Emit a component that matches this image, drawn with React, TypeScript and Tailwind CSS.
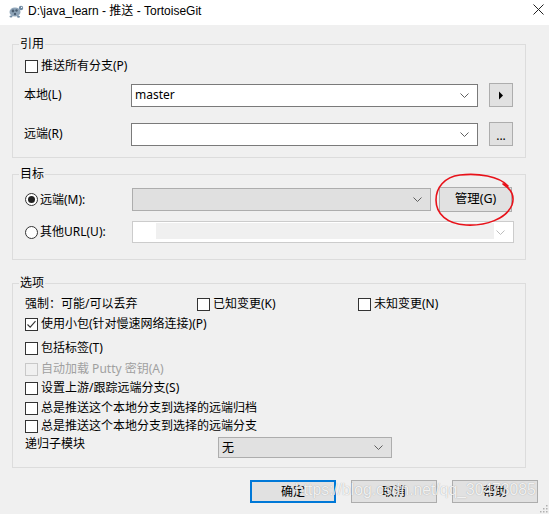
import React from 'react';
import clsx from 'clsx';

const Chevron = ({ color = '#5f5f5f' }: { color?: string }) => (
  <svg width="9" height="5" viewBox="0 0 9 5" className="shrink-0">
    <path d="M0.5 0.5 L4.5 4.5 L8.5 0.5" fill="none" stroke={color} strokeWidth="1" />
  </svg>
);

function Box({ checked, disabled }: { checked?: boolean; disabled?: boolean }) {
  return (
    <span
      className={clsx(
        'w-[13px] h-[13px] border flex items-center justify-center shrink-0',
        disabled ? 'border-[#c8c8c8] bg-[#f0f0f0]' : 'border-[#333333] bg-white'
      )}
    >
      {checked && (
        <svg width="11" height="11" viewBox="0 0 11 11">
          <path d="M1.5 5.5 L4.2 8.2 L9.5 2.2" fill="none" stroke="#333" strokeWidth="1.1" />
        </svg>
      )}
    </span>
  );
}

function Check({ label, checked, disabled, className }: { label: string; checked?: boolean; disabled?: boolean; className?: string }) {
  return (
    <div className={clsx('flex items-center h-[16px] gap-[3px]', disabled && 'text-[#a0a0a0]', className)}>
      <Box checked={checked} disabled={disabled} />
      <span className="whitespace-nowrap">{label}</span>
    </div>
  );
}

function Radio({ label, checked }: { label: string; checked?: boolean }) {
  return (
    <div className="flex items-center gap-[2px] w-[107px] whitespace-nowrap">
      <span className="w-[13px] h-[13px] rounded-full border border-[#333333] bg-white flex items-center justify-center shrink-0">
        {checked && <span className="w-[7px] h-[7px] rounded-full bg-[#222]" />}
      </span>
      <span>{label}</span>
    </div>
  );
}

function Combo({ value, className }: { value?: string; className: string }) {
  return (
    <div className={clsx('flex items-center bg-white border border-[#7a7a7a] pl-[3px] pr-[8px]', className)}>
      <span className="flex-1">{value}</span>
      <Chevron />
    </div>
  );
}

function Btn({ children, className }: { children: React.ReactNode; className: string }) {
  return (
    <div className={clsx('flex items-center justify-center bg-[#e1e1e1] border border-[#adadad]', className)}>
      {children}
    </div>
  );
}

function Group({ title, children }: { title: string; children: React.ReactNode }) {
  return (
    <fieldset className="border border-[#dcdcdc]">
      <legend className="ml-[6px] px-[1px] leading-[14px]">{title}</legend>
      {children}
    </fieldset>
  );
}

export default function App() {
  return (
    <div className="relative w-[549px] h-[514px] overflow-hidden bg-[#f0f0f0] text-[12px] text-black font-['Noto_Sans','Noto_Sans_CJK_SC',sans-serif]">
      {/* title bar */}
      <div className="h-[25px] bg-white flex items-start pt-[2px] pl-[8px] pr-[4px]">
        <svg width="16" height="16" viewBox="0 0 16 16" className="mt-[1px] shrink-0">
          <ellipse cx="7" cy="9" rx="5.5" ry="4.5" fill="#8ea4b8" />
          <circle cx="5" cy="8" r="1.4" fill="#4a5d70" />
          <circle cx="8.5" cy="7.5" r="1.2" fill="#4a5d70" />
          <circle cx="7" cy="11" r="1.2" fill="#4a5d70" />
          <circle cx="13" cy="5" r="2.2" fill="#6f8aa3" />
          <circle cx="13.6" cy="4.4" r="0.6" fill="#fff" />
          <ellipse cx="3" cy="13.5" rx="1.5" ry="1" fill="#6f8aa3" />
          <ellipse cx="10.5" cy="13.8" rx="1.5" ry="1" fill="#6f8aa3" />
        </svg>
        <span className="ml-[4px] text-[12px] leading-[18px] font-['Liberation_Sans','Noto_Sans_CJK_SC',sans-serif]">
          {'D:\\java_learn - 推送 - TortoiseGit'}
        </span>
        <div className="flex-1" />
        <svg width="11" height="11" viewBox="0 0 11 11" className="mt-[2px] mr-[1px]">
          <path d="M0.5 0.5 L10.5 10.5 M10.5 0.5 L0.5 10.5" stroke="#222" strokeWidth="1" />
        </svg>
      </div>

      <div className="pt-[12px] pl-[12px] pr-[23px]">
        {/* 引用 */}
        <Group title="引用">
          <div className="pl-[12px] pr-[11px] pb-[11px]">
            <Check className="mt-[7px]" label="推送所有分支(P)" />
            <div className="mt-[9px] flex items-center">
              <span className="w-[107px] -ml-[1px]">本地(L)</span>
              <Combo value="master" className="w-[347px] h-[23px]" />
              <Btn className="ml-[11px] w-[24px] h-[24px]">
                <svg width="6" height="9" viewBox="0 0 6 9">
                  <path d="M1 0.5 L5 4.5 L1 8.5 Z" fill="#000" />
                </svg>
              </Btn>
            </div>
            <div className="mt-[15px] flex items-center">
              <span className="w-[107px] -ml-[1px]">远端(R)</span>
              <Combo className="w-[347px] h-[23px]" />
              <Btn className="ml-[11px] w-[24px] h-[24px]">
                <span className="leading-[10px] mt-[3px]">...</span>
              </Btn>
            </div>
          </div>
        </Group>

        {/* 目标 */}
        <div className="mt-[9px]">
          <Group title="目标">
            <div className="pl-[12px] pr-[11px] pb-[16px]">
              <div className="mt-[6px] flex items-center h-[25px]">
                <Radio label="远端(M):" checked />
                <div className="w-[299px] h-[23px] bg-[#e0e0e0] border border-[#adadad] flex items-center justify-end pr-[8px]">
                  <Chevron />
                </div>
                <Btn className="ml-[8px] w-[73px] h-[25px]">
                  <span className="text-[12.5px]">管理(G)</span>
                </Btn>
              </div>
              <div className="mt-[9px] flex items-center">
                <Radio label="其他URL(U):" />
                <div className="w-[382px] h-[22px] bg-white border border-[#cccccc] flex items-center pr-[8px]">
                  <div className="ml-[23px] w-[338px] h-[16px] -mt-[2px] bg-[#f0f0f0]" />
                  <div className="flex-1" />
                  <Chevron color="#bdbdbd" />
                </div>
              </div>
            </div>
          </Group>
        </div>

        {/* 选项 */}
        <div className="mt-[16px]">
          <Group title="选项">
            <div className="pl-[12px] pr-[11px] pb-[9px]">
              <div className="mt-[6px] flex items-center h-[16px]">
                <span className="w-[172px] whitespace-nowrap">强制：可能/可以丢弃</span>
                <Check className="w-[161px]" label="已知变更(K)" />
                <Check label="未知变更(N)" />
              </div>
              <Check className="mt-[4px]" label="使用小包(针对慢速网络连接)(P)" checked />
              <Check className="mt-[8px]" label="包括标签(T)" />
              <Check className="mt-[5px]" label="自动加载 Putty 密钥(A)" disabled />
              <Check className="mt-[3px]" label="设置上游/跟踪远端分支(S)" />
              <Check className="mt-[4px]" label="总是推送这个本地分支到选择的远端归档" />
              <Check className="mt-[2px]" label="总是推送这个本地分支到选择的远端分支" />
              <div className="mt-[3px] flex items-start">
                <span className="w-[193px] leading-[14px]">递归子模块</span>
                <div className="w-[174px] h-[21px] bg-[#e1e1e1] border border-[#adadad] flex items-center pl-[3px] pr-[8px]">
                  <span className="flex-1">无</span>
                  <Chevron />
                </div>
              </div>
            </div>
          </Group>
        </div>

        {/* buttons */}
        <div className="mt-[12px] flex justify-end gap-[15px] -mr-[12px]">
          <div className="w-[86px] h-[23px] bg-[#e1e1e1] border-2 border-[#0078d7] flex items-center justify-center">确定</div>
          <Btn className="w-[86px] h-[23px]">取消</Btn>
          <Btn className="w-[86px] h-[23px]">帮助</Btn>
        </div>
      </div>

      {/* watermark */}
      <div className="absolute left-[295px] top-[480px] text-[15.7px] leading-[20px] text-white/85 font-['Liberation_Sans',sans-serif] whitespace-nowrap [text-shadow:0_0_1px_rgba(0,0,0,0.35)] pointer-events-none">
        https://blog.csdn.net/qq_30473085
      </div>

      {/* size grip */}
      <svg width="8" height="8" viewBox="0 0 8 8" className="absolute right-[1px] bottom-[1px]">
        <rect x="6" y="0" width="1.5" height="1.5" fill="#b0b0b0" />
        <rect x="3" y="3" width="1.5" height="1.5" fill="#b0b0b0" />
        <rect x="6" y="3" width="1.5" height="1.5" fill="#b0b0b0" />
        <rect x="0" y="6" width="1.5" height="1.5" fill="#b0b0b0" />
        <rect x="3" y="6" width="1.5" height="1.5" fill="#b0b0b0" />
        <rect x="6" y="6" width="1.5" height="1.5" fill="#b0b0b0" />
      </svg>

      {/* hand-drawn red circle */}
      <svg width="549" height="514" className="absolute left-0 top-0 pointer-events-none">
        <path
          d="M508 186 C499 176 478 173 460 175 C444 177 436 188 436 200 C436 214 447 224 466 225 C486 226 506 219 512 205 C515 196 511 189 503 184"
          fill="none"
          stroke="#e8121a"
          strokeWidth="1.6"
          strokeLinecap="round"
        />
      </svg>
    </div>
  );
}
